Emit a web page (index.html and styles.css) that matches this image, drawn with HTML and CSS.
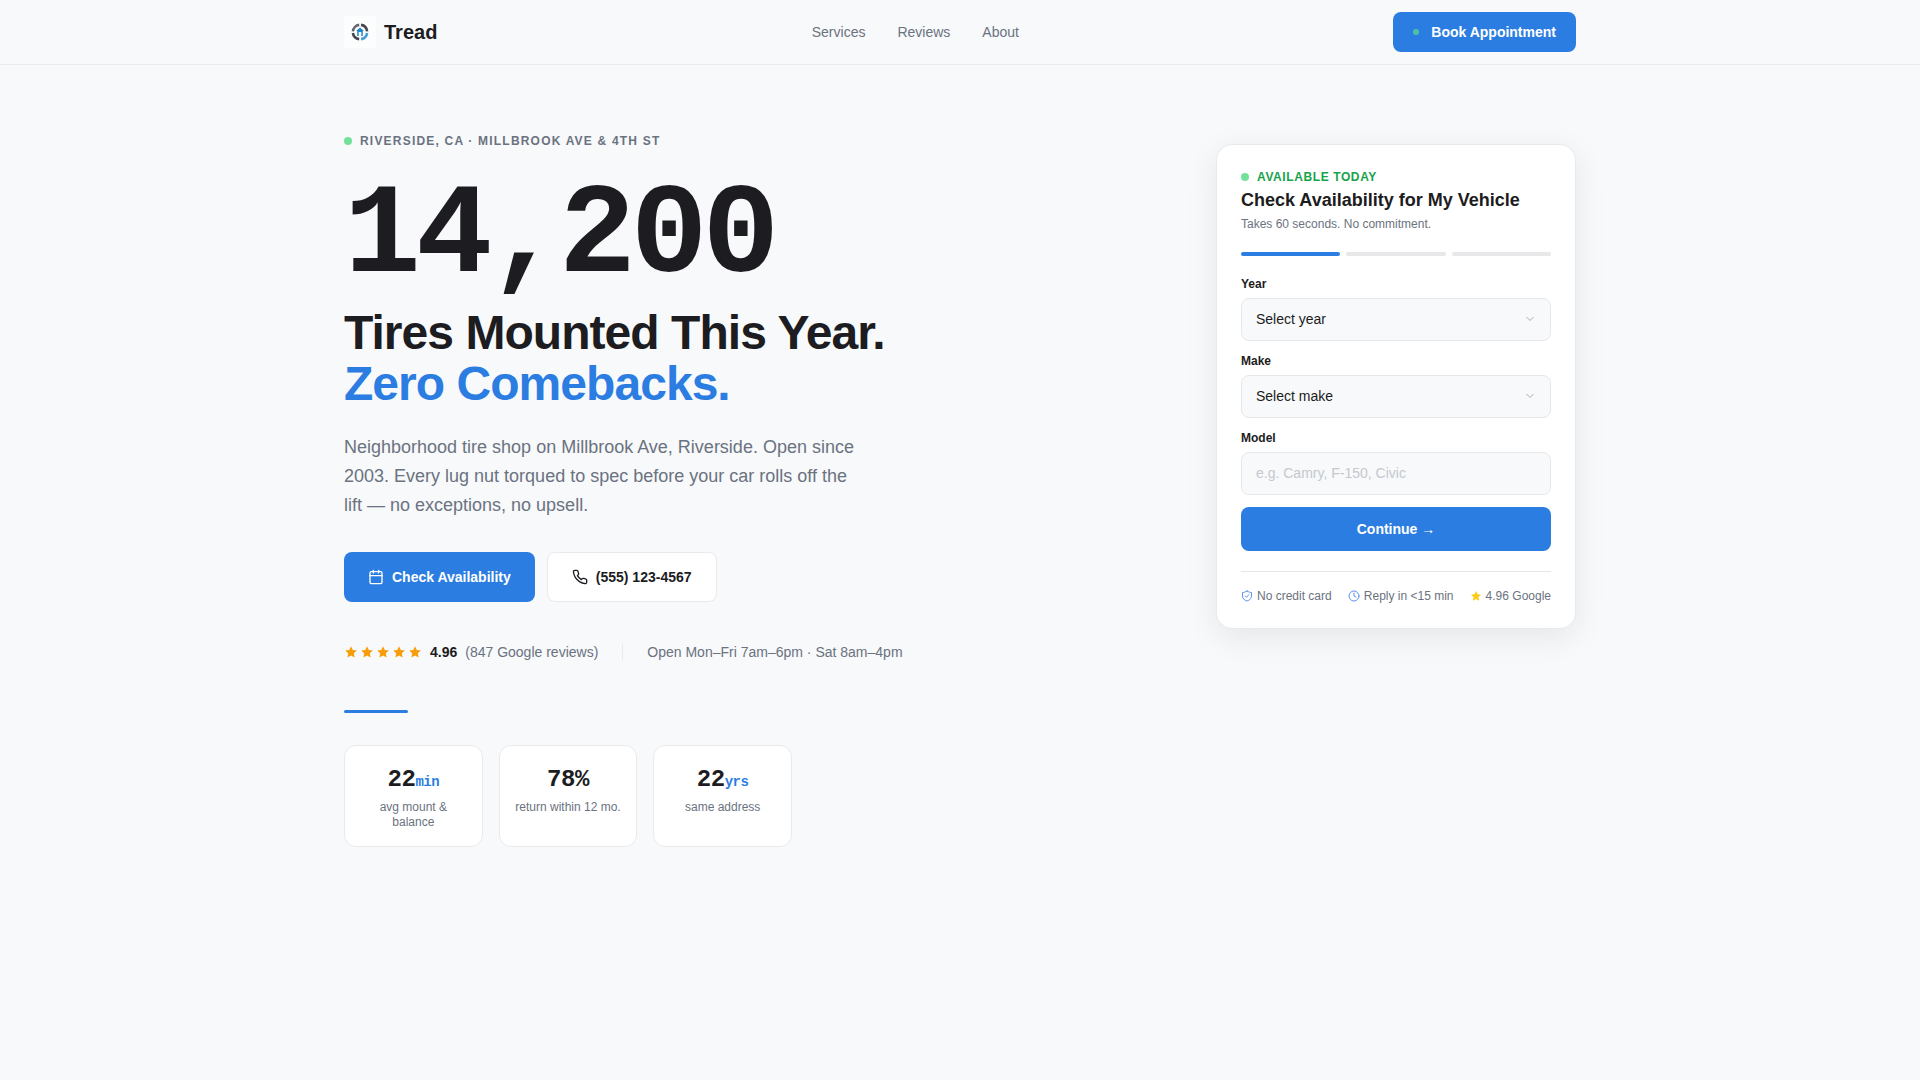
FILE: index.html
```html
<!DOCTYPE html>
<html lang="en">
<head>
    <meta charset="UTF-8">
    <meta name="viewport" content="width=device-width, initial-scale=1.0">
    <title>Tread - Tire Shop in Riverside, CA</title>
    <link rel="stylesheet" href="styles.css">
</head>
<body>
    <header class="site-header">
        <div class="container header-inner">
            <a href="#" class="logo">
                <svg class="logo-mark" viewBox="0 0 32 32" fill="none">
                    <rect width="32" height="32" fill="#fcfdfd"/>
                    <g stroke-width="2.6">
                        <path d="M8.9 15.4A7.200 7.200 0 0 1 15.2 8.900" stroke="#63646c"/>
                        <path d="M17 8.900A7.200 7.200 0 0 1 23.100 15.400" stroke="#45464e"/>
                        <path d="M8.900 17A7.200 7.200 0 0 0 15.200 23.100" stroke="#45464e"/>
                        <path d="M23.100 17A7.200 7.200 0 0 1 17 23.100" stroke="#4a9bdc"/>
                    </g>
                    <path d="M16 11.500l4 3.500h-1.200v5h-1.500v-4h-2.600v4h-1.500v-5H12z" fill="#2186c4"/>
                </svg>
                <span>Tread</span>
            </a>
            <nav class="main-nav">
                <a href="#services">Services</a>
                <a href="#reviews">Reviews</a>
                <a href="#about">About</a>
            </nav>
            <button type="button" class="btn btn-primary btn-book"><span class="book-dot"></span>Book Appointment</button>
        </div>
    </header>

    <main class="container hero">
        <section class="hero-content">
            <p class="location"><span class="dot"></span>Riverside, CA · Millbrook Ave &amp; 4th St</p>
            <h1>
                <span class="big-number">14,200</span>
                <span class="headline">Tires Mounted This Year.</span>
                <span class="headline accent">Zero Comebacks.</span>
            </h1>
            <p class="intro">Neighborhood tire shop on Millbrook Ave, Riverside. Open since 2003. Every lug nut torqued to spec before your car rolls off the lift — no exceptions, no upsell.</p>

            <div class="actions">
                <button type="button" class="btn btn-primary">
                    <svg class="icon" viewBox="0 0 24 24"><rect x="3" y="4" width="18" height="18" rx="2"/><path d="M16 2v4M8 2v4M3 10h18"/></svg>
                    Check Availability
                </button>
                <a href="tel:5551234567" class="btn btn-outline">
                    <svg class="icon" viewBox="0 0 24 24"><path d="M22 16.92v3a2 2 0 0 1-2.18 2 19.79 19.79 0 0 1-8.63-3.07 19.5 19.5 0 0 1-6-6 19.79 19.79 0 0 1-3.07-8.67A2 2 0 0 1 4.11 2h3a2 2 0 0 1 2 1.72c.13.96.36 1.9.7 2.81a2 2 0 0 1-.45 2.11L8.09 9.91a16 16 0 0 0 6 6l1.27-1.27a2 2 0 0 1 2.11-.45c.91.34 1.85.57 2.81.7A2 2 0 0 1 22 16.92z"/></svg>
                    (555) 123-4567
                </a>
            </div>

            <div class="rating-row">
                <div class="stars">
                    <svg viewBox="0 0 24 24"><path d="M12 2l3 6.500 7 .8-5.100 4.900 1.300 7.100L12 17.900l-6.200 3.400 1.300-7.100L2 9.300l7-.8z"/></svg>
                    <svg viewBox="0 0 24 24"><path d="M12 2l3 6.500 7 .8-5.100 4.900 1.300 7.100L12 17.900l-6.200 3.400 1.300-7.100L2 9.300l7-.8z"/></svg>
                    <svg viewBox="0 0 24 24"><path d="M12 2l3 6.500 7 .8-5.100 4.900 1.300 7.100L12 17.900l-6.200 3.400 1.300-7.100L2 9.300l7-.8z"/></svg>
                    <svg viewBox="0 0 24 24"><path d="M12 2l3 6.500 7 .8-5.100 4.900 1.300 7.100L12 17.900l-6.200 3.400 1.300-7.100L2 9.300l7-.8z"/></svg>
                    <svg viewBox="0 0 24 24"><path d="M12 2l3 6.500 7 .8-5.100 4.900 1.300 7.100L12 17.900l-6.200 3.400 1.300-7.100L2 9.300l7-.8z"/></svg>
                </div>
                <strong>4.96</strong>
                <span>(847 Google reviews)</span>
                <span class="hours">Open Mon–Fri 7am–6pm · Sat 8am–4pm</span>
            </div>

            <div class="accent-line"></div>

            <div class="stats">
                <div class="stat">
                    <div class="stat-value">22<span>min</span></div>
                    <div class="stat-label">avg mount &amp; balance</div>
                </div>
                <div class="stat">
                    <div class="stat-value">78%</div>
                    <div class="stat-label">return within 12 mo.</div>
                </div>
                <div class="stat">
                    <div class="stat-value">22<span>yrs</span></div>
                    <div class="stat-label">same address</div>
                </div>
            </div>
        </section>

        <form class="booking-card">
            <p class="available"><span class="dot"></span>Available Today</p>
            <h2>Check Availability for My Vehicle</h2>
            <p class="card-note">Takes 60 seconds. No commitment.</p>

            <div class="steps">
                <span class="step active"></span>
                <span class="step"></span>
                <span class="step"></span>
            </div>

            <label for="year">Year</label>
            <div class="select-wrap">
                <select id="year"><option>Select year</option></select>
                <svg class="chevron" viewBox="0 0 24 24"><path d="M5 8l7 7 7-7"/></svg>
            </div>

            <label for="make">Make</label>
            <div class="select-wrap">
                <select id="make"><option>Select make</option></select>
                <svg class="chevron" viewBox="0 0 24 24"><path d="M5 8l7 7 7-7"/></svg>
            </div>

            <label for="model">Model</label>
            <input type="text" id="model" placeholder="e.g. Camry, F-150, Civic">

            <button type="button" class="btn btn-primary btn-continue">Continue →</button>

            <div class="trust">
                <span><svg class="icon" viewBox="0 0 24 24"><path d="M12 2c3 2 6 3 9 3v7c0 5-4 8.500-9 10-5-1.500-9-5-9-10V5c3 0 6-1 9-3z"/><path d="M8.500 12l2.500 2.500 4.500-5"/></svg>No credit card</span>
                <span><svg class="icon" viewBox="0 0 24 24"><circle cx="12" cy="12" r="10"/><path d="M12 6v6l4 2"/></svg>Reply in &lt;15 min</span>
                <span><svg class="icon icon-star" viewBox="0 0 24 24"><path d="M12 2l3 6.500 7 .8-5.100 4.900 1.300 7.100L12 17.900l-6.200 3.400 1.300-7.100L2 9.300l7-.8z"/></svg>4.96 Google</span>
            </div>
        </form>
    </main>
</body>
</html>
```
FILE: styles.css
```css
* {
    box-sizing: border-box;
}

body {
    margin: 0;
    background-color: #f7f9fb;
    color: #1c1c21;
    font-family: 'Liberation Sans', Arial, sans-serif;
    font-size: 14px;
    line-height: 20px;
    min-height: 100vh;
}

a {
    color: inherit;
    text-decoration: none;
}

p, h1, h2 {
    margin: 0;
}

.container {
    max-width: 1280px;
    margin: 0 auto;
    padding: 0 24px;
}

/* Header */

.site-header {
    border-bottom: 1px solid #e8eaed;
}

.header-inner {
    display: flex;
    justify-content: space-between;
    align-items: center;
    height: 64px;
}

.logo {
    display: flex;
    align-items: center;
    gap: 8px;
    font-size: 20px;
    font-weight: bold;
}

.logo-mark {
    width: 32px;
    height: 32px;
}

.main-nav {
    display: flex;
    gap: 32px;
    color: #6b7280;
}

.main-nav a:hover {
    color: #1c1c21;
}

/* Buttons */

.btn {
    display: inline-flex;
    align-items: center;
    justify-content: center;
    gap: 8px;
    height: 50px;
    padding: 0 24px;
    border: none;
    border-radius: 8px;
    font-family: inherit;
    font-size: 14px;
    font-weight: bold;
    cursor: pointer;
}

.btn-primary {
    background-color: #2b7de1;
    color: #fff;
}

.btn-primary:hover {
    background-color: #2069c4;
}

.btn-outline {
    background-color: #fff;
    border: 1px solid #e8eaed;
}

.btn-book {
    height: 40px;
    padding: 0 20px;
    gap: 12px;
}

.book-dot {
    width: 6px;
    height: 6px;
    border-radius: 50%;
    background-color: #4fc0a4;
}

.icon {
    width: 16px;
    height: 16px;
    fill: none;
    stroke: currentColor;
    stroke-width: 2;
    stroke-linecap: round;
    stroke-linejoin: round;
}

/* Hero */

.hero {
    display: flex;
    justify-content: space-between;
    align-items: flex-start;
    gap: 64px;
    padding-top: 64px;
    padding-bottom: 64px;
}

.location,
.available {
    display: flex;
    align-items: center;
    gap: 8px;
    font-size: 12px;
    font-weight: bold;
    text-transform: uppercase;
}

.location {
    color: #6b7280;
    line-height: 24px;
    letter-spacing: 0.1em;
}

.dot {
    width: 8px;
    height: 8px;
    border-radius: 50%;
    background-color: #74e19b;
}

.big-number,
.headline {
    display: block;
}

.big-number {
    margin-top: 20px;
    margin-bottom: 6px;
    font-family: 'Liberation Mono', 'Courier New', monospace;
    font-size: 128px;
    line-height: 128px;
    letter-spacing: -0.04em;
}

.headline {
    font-size: 48px;
    line-height: 51px;
    letter-spacing: -0.02em;
}

.accent {
    color: #2b7de1;
}

.intro {
    max-width: 520px;
    margin-top: 24px;
    color: #6b7280;
    font-size: 18px;
    line-height: 29px;
}

.actions {
    display: flex;
    gap: 12px;
    margin-top: 32px;
}

.rating-row {
    display: flex;
    align-items: center;
    gap: 8px;
    margin-top: 40px;
    color: #6b7280;
}

.rating-row strong {
    color: #1c1c21;
}

.stars {
    display: flex;
    gap: 2px;
}

.stars svg {
    width: 14px;
    height: 14px;
    fill: #f59e0b;
}

.hours {
    margin-left: 16px;
    padding-left: 24px;
    border-left: 1px solid #e8eaed;
    line-height: 16px;
}

.accent-line {
    width: 64px;
    height: 3px;
    margin: 48px 0 32px;
    border-radius: 2px;
    background-color: #2b7de1;
}

.stats {
    display: grid;
    grid-template-columns: repeat(3, 1fr);
    gap: 16px;
    max-width: 448px;
}

.stat {
    padding: 16px 12px;
    border: 1px solid #e8eaed;
    border-radius: 12px;
    background-color: #fff;
    text-align: center;
}

.stat-value {
    font-family: 'Liberation Mono', 'Courier New', monospace;
    font-size: 24px;
    line-height: 36px;
    font-weight: bold;
    letter-spacing: -0.02em;
}

.stat-value span {
    color: #2b7de1;
    font-size: 14px;
    line-height: 14px;
}

.stat-label {
    margin-top: 2px;
    color: #6b7280;
    font-size: 12px;
    line-height: 15px;
}

/* Booking card */

.booking-card {
    flex: 0 0 360px;
    margin-top: 15px;
    padding: 21px 24px 24px;
    border: 1px solid #e8eaed;
    border-radius: 16px;
    background-color: #fff;
    box-shadow: 0 8px 32px rgba(0, 0, 0, 0.08);
}

.available {
    color: #16a34a;
    line-height: 22px;
    letter-spacing: 0.05em;
}

.booking-card h2 {
    font-size: 18px;
    line-height: 24px;
}

.card-note {
    color: #6b7280;
    font-size: 12px;
    line-height: 24px;
}

.steps {
    display: flex;
    gap: 6px;
    margin: 16px 0 20px;
}

.step {
    flex: 1;
    height: 4px;
    border-radius: 2px;
    background-color: #e8e8ea;
}

.step.active {
    background-color: #2b7de1;
}

.booking-card label {
    display: block;
    margin-bottom: 6px;
    font-size: 12px;
    line-height: 16px;
    font-weight: bold;
}

.booking-card select,
.booking-card input {
    display: block;
    width: 100%;
    height: 43px;
    margin-bottom: 12px;
    padding: 0 14px 2px;
    border: 1px solid #e5e7eb;
    border-radius: 8px;
    background-color: #f7f9fb;
    color: #1c1c21;
    font-family: inherit;
    font-size: 14px;
    appearance: none;
}

.booking-card input::placeholder {
    color: #c5c8cd;
}

.select-wrap {
    position: relative;
}

.chevron {
    position: absolute;
    top: 15px;
    right: 15px;
    width: 12px;
    height: 12px;
    fill: none;
    stroke: #a9adb5;
    stroke-width: 2;
    pointer-events: none;
}

.btn-continue {
    width: 100%;
    height: 44px;
}

.trust {
    display: flex;
    justify-content: space-between;
    margin-top: 20px;
    padding-top: 16px;
    border-top: 1px solid #e5e7eb;
    color: #6b7280;
    font-size: 12px;
    line-height: 16px;
}

.trust span {
    display: flex;
    align-items: center;
    gap: 4px;
}

.trust .icon {
    width: 12px;
    height: 12px;
    color: #5b94ea;
}

.trust .icon-star {
    fill: #facc15;
    stroke: none;
}

@media (max-width: 1000px) {
    .hero {
        flex-direction: column;
    }

    .booking-card {
        flex-basis: auto;
        width: 100%;
    }
}
```
